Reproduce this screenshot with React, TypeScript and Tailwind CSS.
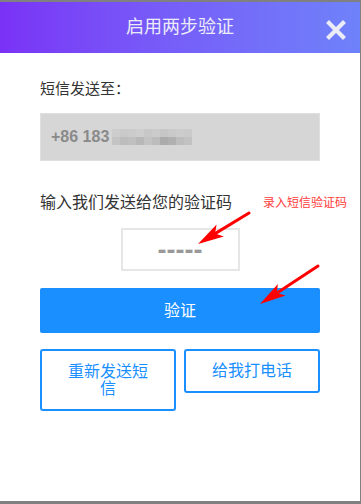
import { useState } from "react";

// pixelated (mosaic) phone digits
const mosaic = [
  ["#cdcdcd", "#c9c9c9", "#cbcbcb", "#cecece", "#c8c8c8", "#cbcbcb", "#c6c6c6", "#c9c9c9", "#cccccc", "#cacaca"],
  ["#c4c4c4", "#bdbdbd", "#c0c0c0", "#b8b8b8", "#c3c3c3", "#bcbcbc", "#ababab", "#b0b0b0", "#bdbdbd", "#c2c2c2"],
];

const Arrow = ({ x1, y1, x2, y2 }: { x1: number; y1: number; x2: number; y2: number }) => {
  const dx = x2 - x1;
  const dy = y2 - y1;
  const len = Math.hypot(dx, dy);
  const ux = dx / len;
  const uy = dy / len;
  const head = 26;
  const wing = 7;
  const bx = x2 - ux * head;
  const by = y2 - uy * head;
  const nx = -uy;
  const ny = ux;
  const points = `${x2},${y2} ${bx + nx * wing},${by + ny * wing} ${bx + ux * 6},${by + uy * 6} ${bx - nx * wing},${by - ny * wing}`;
  return (
    <g>
      <line x1={x1} y1={y1} x2={bx + ux * 8} y2={by + uy * 8} stroke="#ff0000" strokeWidth={3} strokeLinecap="round" />
      <polygon points={points} fill="#ff0000" />
    </g>
  );
};

export default function App() {
  const [code, setCode] = useState("");

  return (
    <div
      className="relative w-[361px] h-[504px] bg-white border-t-2 border-r border-b-[3px] border-[#808080] overflow-hidden"
      style={{ fontFamily: '"Liberation Sans", "Noto Sans CJK SC", sans-serif' }}
    >
      <div className="h-[51px] flex items-center justify-center relative bg-gradient-to-r from-[#7a31f6] to-[#6e82fa]">
        <span className="text-[18px] text-[#ececf8]">启用两步验证</span>
        <button className="absolute right-[13px] top-[17px] w-[22px] h-[22px] flex items-center justify-center" aria-label="关闭">
          <svg width="20" height="20" viewBox="0 0 20 20">
            <path d="M3 3 L17 17 M17 3 L3 17" stroke="#ececf6" strokeWidth="4.2" strokeLinecap="square" />
          </svg>
        </button>
      </div>

      <div className="px-10 flex flex-col">
        <div className="mt-[26px] text-[15px] leading-[20px] text-[#333]">短信发送至：</div>

        <div className="mt-[14px] h-[48px] bg-[#d6d6d6] border border-[#e0e0e0] flex items-center pl-[10px]">
          <span className="text-[16px] font-bold text-[#8a8a8a]">+86 183</span>
          <div className="ml-[3px] flex flex-col">
            {mosaic.map((row, r) => (
              <div key={r} className="flex">
                {row.map((c, i) => (
                  <div key={i} className="w-[8px] h-[8px]" style={{ background: c }} />
                ))}
              </div>
            ))}
          </div>
        </div>

        <div className="mt-[32px] flex items-center h-[20px]">
          <span className="text-[16px] text-[#333]">输入我们发送给您的验证码</span>
          <span className="ml-auto -mr-[27px] text-[12px] text-[#ff3b3b]">录入短信验证码</span>
        </div>

        <div className="mt-[15px] self-center w-[119px] h-[43px] border-2 border-[#e6e6e6] flex items-center justify-center">
          <input
            value={code}
            onChange={(e) => setCode(e.target.value)}
            placeholder="-----"
            className="w-full text-center outline-none bg-transparent text-[27px] font-bold text-[#999] placeholder:text-[#999] pt-[2px]"
          />
        </div>

        <button className="mt-[17px] h-[45px] bg-[#1a8fff] rounded-[2px] text-white text-[16px]">验证</button>

        <div className="mt-[16px] grid grid-cols-2 gap-2 items-start">
          <button className="border-2 border-[#1a8fff] rounded-[3px] text-[#1a8fff] text-[16px] leading-[17px] px-5 py-[12px]">
            重新发送短信
          </button>
          <button className="h-[44px] border-2 border-[#1a8fff] rounded-[3px] text-[#1a8fff] text-[16px]">给我打电话</button>
        </div>
      </div>

      <svg className="absolute left-0 top-0 pointer-events-none" width="361" height="504">
        <Arrow x1={249} y1={211} x2={198} y2={242} />
        <Arrow x1={318} y1={264} x2={260} y2={302} />
      </svg>
    </div>
  );
}
